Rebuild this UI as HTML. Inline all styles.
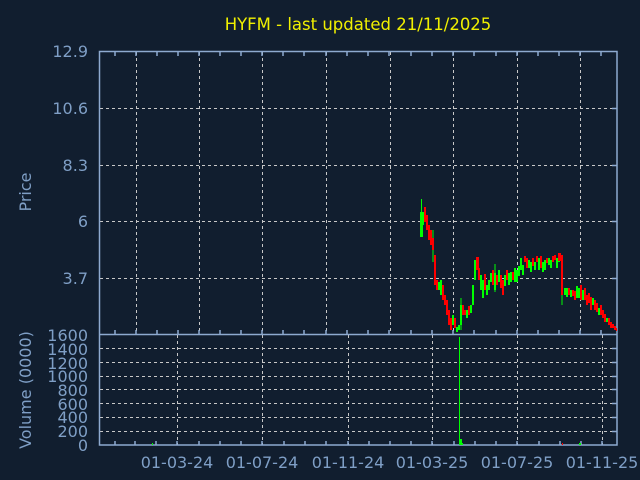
<!DOCTYPE html>
<html><head><meta charset="utf-8"><style>
html,body{margin:0;padding:0;background:#111e2f;}
svg{display:block;}
text{font-family:"DejaVu Sans","Liberation Sans",sans-serif;fill:#7f9fc6;}
</style></head><body>
<svg width="640" height="480" viewBox="0 0 640 480" xmlns="http://www.w3.org/2000/svg">
<rect width="640" height="480" fill="#111e2f"/>
<text x="358" y="30" font-size="16.5" text-anchor="middle" style="fill:#f0f000">HYFM - last updated 21/11/2025</text>
<g stroke="#c8c8c8" stroke-width="1" stroke-dasharray="3,3" fill="none">
<path d="M136.5 52V334M199.5 52V334M262.5 52V334M326.5 52V334M390.5 52V334M453.5 52V334M517.5 52V334M580.5 52V334"/>
<path d="M100 108.5H617M100 165.5H617M100 221.5H617M100 278.5H617"/>
<path d="M177.5 335V445M262.5 335V445M348.5 335V445M432.5 335V445M517.5 335V445M602.5 335V445"/>
<path d="M100 348.5H617M100 362.5H617M100 376.5H617M100 389.5H617M100 403.5H617M100 417.5H617M100 431.5H617"/>
</g>
<g stroke="#8eaad0" stroke-width="1.5" fill="none">
<rect x="99.5" y="51.5" width="517.5" height="393.5"/>
<path d="M99.5 334.5H617"/>
<path d="M115 51V56M136 51V56M157 51V56M178 51V56M199 51V56M220 51V56M241 51V56M262 51V56M283 51V56M304 51V56M326 51V56M347 51V56M368 51V56M389 51V56M411 51V56M432 51V56M453 51V56M474 51V56M496 51V56M517 51V56M538 51V56M559 51V56M580 51V56M601 51V56"/>
<path d="M115 334V330M136 334V330M157 334V330M178 334V330M199 334V330M220 334V330M241 334V330M262 334V330M283 334V330M304 334V330M326 334V330M347 334V330M368 334V330M389 334V330M411 334V330M432 334V330M453 334V330M474 334V330M496 334V330M517 334V330M538 334V330M559 334V330M580 334V330M601 334V330"/>
<path d="M115 445V441M135 445V441M156 445V441M177 445V441M199 445V441M220 445V441M241 445V441M262 445V441M284 445V441M305 445V441M326 445V441M348 445V441M369 445V441M390 445V441M411 445V441M432 445V441M454 445V441M475 445V441M496 445V441M517 445V441M539 445V441M560 445V441M581 445V441M602 445V441"/>
<path d="M612 108.5H617M612 165.5H617M612 221.5H617M612 278.5H617M612 348.5H617M612 362.5H617M612 376.5H617M612 389.5H617M612 403.5H617M612 417.5H617M612 431.5H617"/>
</g>
<g font-size="16" text-anchor="end">
<text x="88" y="57">12.9</text>
<text x="88" y="114">10.6</text>
<text x="88" y="171">8.3</text>
<text x="88" y="227">6</text>
<text x="88" y="284">3.7</text>
<text x="88" y="341">1600</text>
<text x="88" y="355">1400</text>
<text x="88" y="369">1200</text>
<text x="88" y="382">1000</text>
<text x="88" y="396">800</text>
<text x="88" y="410">600</text>
<text x="88" y="423">400</text>
<text x="88" y="437">200</text>
<text x="88" y="451">0</text>
</g>
<g font-size="16" text-anchor="middle">
<text x="177" y="468">01-03-24</text>
<text x="262" y="468">01-07-24</text>
<text x="348" y="468">01-11-24</text>
<text x="432" y="468">01-03-25</text>
<text x="517" y="468">01-07-25</text>
<text x="602" y="468">01-11-25</text>
</g>
<text transform="translate(31,192) rotate(-90)" font-size="16" text-anchor="middle">Price</text>
<text transform="translate(31,390) rotate(-90)" font-size="16" text-anchor="middle">Volume (0000)</text>
<g>
<path d="M421.5 199V237M495 264V292M461 298V330M562 255V305M433 230V262" stroke="#00ff00" stroke-width="1"/>
<g fill="#00ff00">
<rect x="420" y="212" width="3" height="25"/><rect x="422" y="212" width="2" height="13"/>
<rect x="438" y="282" width="2" height="8"/><rect x="440" y="280" width="2" height="15"/>
<rect x="452" y="315" width="2" height="10"/><rect x="456" y="327" width="2" height="5"/><rect x="458" y="325" width="2" height="5"/>
<rect x="460" y="305" width="2" height="20"/><rect x="466" y="310" width="2" height="8"/><rect x="470" y="305" width="2" height="8"/>
<rect x="472" y="285" width="2" height="20"/><rect x="474" y="260" width="2" height="20"/><rect x="480" y="275" width="2" height="15"/>
<rect x="482" y="280" width="2" height="18"/><rect x="486" y="285" width="2" height="10"/><rect x="488" y="280" width="2" height="10"/>
<rect x="490" y="273" width="2" height="9"/><rect x="494" y="273" width="2" height="17"/><rect x="498" y="270" width="2" height="12"/>
<rect x="504" y="275" width="2" height="11"/><rect x="508" y="273" width="2" height="12"/><rect x="510" y="272" width="2" height="10"/>
<rect x="514" y="268" width="2" height="14"/><rect x="516" y="270" width="2" height="12"/><rect x="518" y="266" width="2" height="10"/>
<rect x="520" y="258" width="2" height="12"/><rect x="522" y="265" width="2" height="10"/><rect x="528" y="260" width="2" height="8"/>
<rect x="530" y="262" width="2" height="10"/><rect x="534" y="262" width="2" height="8"/><rect x="538" y="258" width="2" height="12"/>
<rect x="542" y="262" width="2" height="10"/><rect x="544" y="260" width="2" height="10"/><rect x="548" y="258" width="2" height="7"/>
<rect x="550" y="260" width="2" height="8"/><rect x="556" y="258" width="2" height="10"/><rect x="558" y="256" width="2" height="6"/>
<rect x="564" y="288" width="2" height="7"/><rect x="566" y="288" width="2" height="9"/><rect x="570" y="290" width="2" height="7"/>
<rect x="576" y="286" width="2" height="12"/><rect x="578" y="288" width="2" height="10"/><rect x="582" y="290" width="2" height="10"/>
<rect x="592" y="298" width="2" height="7"/><rect x="598" y="308" width="2" height="7"/><rect x="606" y="318" width="2" height="4"/>
</g>
<g fill="#ff0000">
<rect x="424" y="207" width="2" height="15"/><rect x="426" y="215" width="2" height="15"/><rect x="428" y="225" width="2" height="15"/>
<rect x="430" y="230" width="2" height="15"/><rect x="432" y="238" width="2" height="12"/><rect x="434" y="255" width="2" height="30"/>
<rect x="436" y="280" width="2" height="10"/><rect x="442" y="285" width="2" height="15"/><rect x="444" y="295" width="2" height="10"/>
<rect x="446" y="300" width="2" height="15"/><rect x="448" y="310" width="2" height="15"/><rect x="450" y="318" width="2" height="12"/>
<rect x="454" y="318" width="2" height="10"/><rect x="462" y="305" width="2" height="10"/><rect x="464" y="310" width="2" height="5"/>
<rect x="468" y="306" width="2" height="9"/><rect x="476" y="257" width="3" height="13"/><rect x="478" y="268" width="2" height="12"/>
<rect x="484" y="274" width="2" height="16"/><rect x="492" y="270" width="2" height="15"/><rect x="496" y="275" width="2" height="10"/>
<rect x="500" y="275" width="2" height="13"/><rect x="502" y="280" width="2" height="15"/><rect x="506" y="270" width="2" height="10"/>
<rect x="512" y="272" width="2" height="8"/><rect x="524" y="256" width="2" height="6"/><rect x="526" y="258" width="2" height="10"/>
<rect x="532" y="258" width="2" height="8"/><rect x="536" y="256" width="2" height="6"/><rect x="540" y="256" width="2" height="12"/>
<rect x="546" y="258" width="2" height="5"/><rect x="552" y="256" width="2" height="6"/><rect x="554" y="255" width="2" height="5"/>
<rect x="558" y="253" width="3" height="8"/><rect x="561" y="255" width="2" height="40"/><rect x="568" y="288" width="2" height="7"/>
<rect x="572" y="290" width="2" height="6"/><rect x="574" y="291" width="2" height="9"/><rect x="580" y="285" width="2" height="15"/>
<rect x="584" y="288" width="2" height="12"/><rect x="586" y="295" width="2" height="10"/><rect x="588" y="293" width="2" height="10"/>
<rect x="590" y="297" width="2" height="13"/><rect x="594" y="300" width="2" height="10"/><rect x="596" y="303" width="2" height="9"/>
<rect x="600" y="305" width="2" height="10"/><rect x="602" y="310" width="2" height="8"/><rect x="604" y="314" width="2" height="8"/>
<rect x="608" y="318" width="2" height="7"/><rect x="610" y="322" width="2" height="6"/><rect x="612" y="324" width="2" height="4"/>
<rect x="614" y="326" width="2" height="4"/><rect x="616" y="328" width="1" height="3"/>
</g>
<rect x="459" y="337" width="1" height="108" fill="#00ff00"/>
<rect x="460" y="439" width="2" height="6" fill="#00ff00"/>
<rect x="462" y="443" width="1" height="2" fill="#00ff00"/>
<rect x="152" y="443" width="1" height="2" fill="#00ff00"/>
<rect x="562" y="443" width="1" height="2" fill="#ff0000"/>
<rect x="579" y="443" width="2" height="2" fill="#00ff00"/>
</g>
</svg>
</body></html>
